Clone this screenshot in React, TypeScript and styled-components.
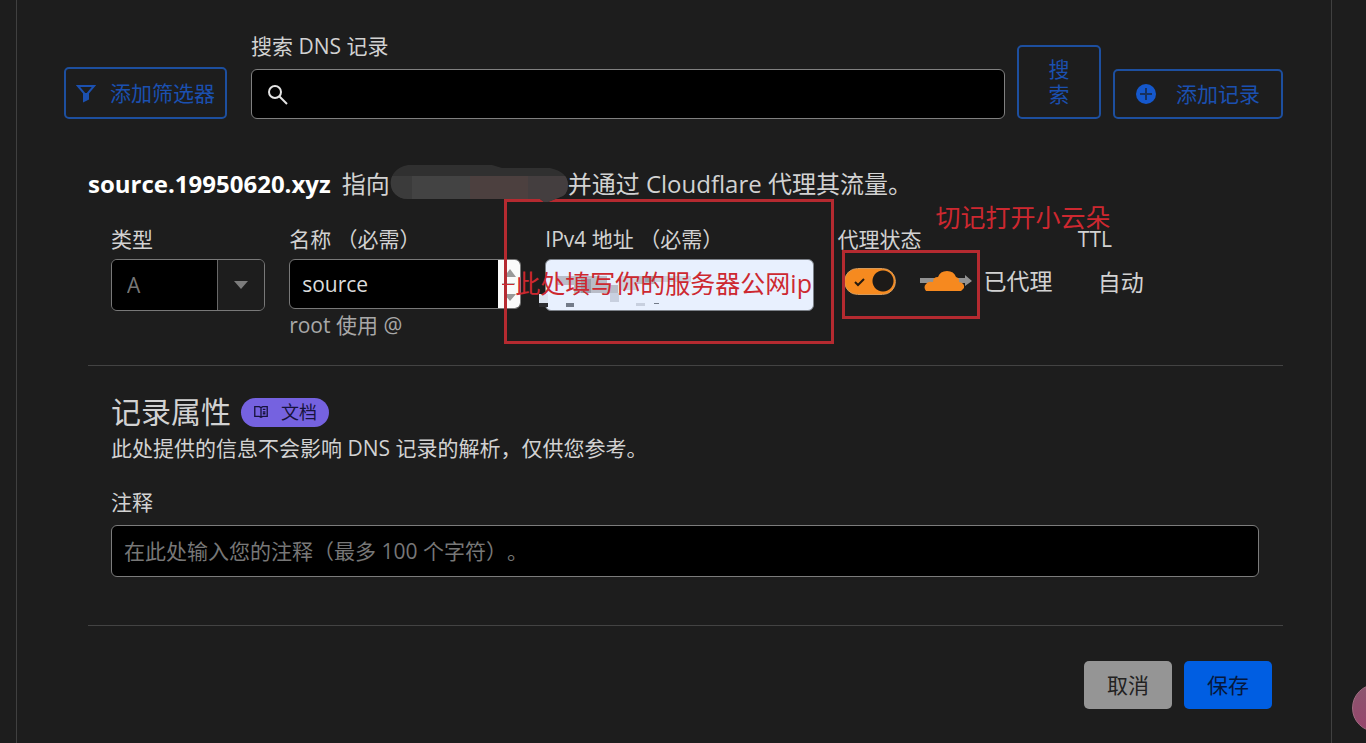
import React from "react";
import styled, { createGlobalStyle } from "styled-components";

const GlobalStyle = createGlobalStyle`
  *, *::before, *::after { box-sizing: border-box; }
  body {
    margin: 0;
    background: #1d1d1d;
    color: #d2d2d2;
    font: 21px/24px "Open Sans", "Noto Sans CJK SC", sans-serif;
    text-spacing-trim: space-all;
  }
  button, input, select { font: inherit; margin: 0; }
`;

const Panel = styled.main`
  min-height: 100vh;
  margin: 0 34px 0 16px;
  padding: 34px 48px 34px 47px;
  border: solid #404040;
  border-width: 0 1px;
`;

const Toolbar = styled.form`
  display: flex;
  align-items: flex-end;
  gap: 12px;
`;

const OutlineButton = styled.button<{ $gap?: number; $pad: number; $tall?: boolean }>`
  display: flex;
  align-items: center;
  justify-content: center;
  gap: ${(p) => p.$gap ?? 0}px;
  flex: none;
  min-height: ${(p) => (p.$tall ? 52 : 50)}px;
  padding: 10px ${(p) => p.$pad}px;
  border: 2px solid #1d4f9f;
  border-radius: 5px;
  background: transparent;
  color: #1b50b0;
  line-height: 25px;
  white-space: nowrap;
`;

const StackedButton = styled(OutlineButton)`
  width: 84px;
  white-space: normal;
`;

const SearchField = styled.div`
  flex: 1;
  min-width: 0;
  margin-left: 12px;
  display: flex;
  flex-direction: column;
  gap: 11px;
`;

const Label = styled.label`
  display: block;
  white-space: nowrap;
`;

const SearchBox = styled.div`
  display: flex;
  align-items: center;
  gap: 10px;
  height: 50px;
  padding: 0 15px;
  border: 1px solid #808080;
  border-radius: 6px;
  background: #000;
`;

const BareInput = styled.input`
  flex: 1;
  min-width: 0;
  border: 0;
  outline: 0;
  background: transparent;
  color: #dcdcdc;
`;

const Record = styled.form`
  margin: 49px 0 0 24px;
`;

const Summary = styled.p`
  display: flex;
  align-items: center;
  height: 32px;
  margin: 0;
  font-size: 24px;
  line-height: 32px;
  white-space: nowrap;
`;

const RecordName = styled.strong`
  margin-right: 11px;
  color: #fff;
`;

const HiddenAddress = styled.svg`
  position: relative;
  z-index: 2;
  flex: none;
`;

const Fields = styled.div`
  display: grid;
  grid-template-columns: 154fr 232fr 268fr 216fr 181fr;
  gap: 24px;
  margin: 27px 24px 28px 23px;
`;

const Field = styled.div`
  position: relative;
  min-width: 0;
  display: flex;
  flex-direction: column;
  gap: 8px;
`;

const SelectBox = styled.div`
  display: grid;
  grid-template-columns: 1fr 47px;
  height: 52px;
  border: 1px solid #787878;
  border-radius: 6px;
  overflow: hidden;
`;

const Select = styled.select`
  appearance: none;
  grid-area: 1 / 1 / 2 / 3;
  padding: 0 15px;
  border: 0;
  background: linear-gradient(to left, #1d1d1d 46px, #686868 46px, #686868 47px, #000 47px);
  color: #777;
  opacity: 1;
`;

const Caret = styled.svg`
  grid-area: 1 / 2 / 2 / 3;
  place-self: center;
  z-index: 1;
  pointer-events: none;
`;

const NameBox = styled.div`
  display: flex;
  height: 50px;
  border: 1px solid #787878;
  border-radius: 6px;
  background: #000;
  overflow: hidden;
`;

const NameInput = styled(BareInput)`
  padding: 0 12px;
`;

const Stepper = styled.svg`
  flex: none;
  background: #fafafa;
`;

const Hint = styled.span`
  margin-top: -4px;
  color: #a8a8a8;
`;

const AddressInput = styled.input`
  width: 100%;
  height: 52px;
  padding: 0 12px;
  border: 1px solid #7c8188;
  border-radius: 6px;
  background: #e8f0fe;
  color: #222;
`;

const Pixelation = styled.svg`
  position: absolute;
  left: -6px;
  top: 49px;
`;

const RedFrame = styled.div<{ $inset: string }>`
  position: absolute;
  z-index: 1;
  inset: ${(p) => p.$inset};
  border: 3px solid #b52a30;
  pointer-events: none;
`;

const RedNote = styled.div<{ $left: number; $top: number }>`
  position: absolute;
  z-index: 2;
  left: ${(p) => p.$left}px;
  top: ${(p) => p.$top}px;
  color: #cd2830;
  font-size: 25px;
  line-height: 26px;
  white-space: nowrap;
  pointer-events: none;
`;

const NoteDash = styled.i`
  position: absolute;
  left: -13px;
  top: 14px;
  width: 12px;
  height: 1px;
  background: #cd2830;
`;

const ProxyRow = styled.label`
  display: flex;
  align-items: center;
  height: 44px;
  padding-left: 6px;
  font-size: 23px;
  white-space: nowrap;
`;

const Toggle = styled.input`
  appearance: none;
  flex: none;
  width: 52px;
  height: 27px;
  margin: 0;
  border: 1px solid #d69a5a;
  border-radius: 14px;
  background:
    url("data:image/svg+xml,%3Csvg xmlns='http://www.w3.org/2000/svg' width='14' height='12' fill='none' stroke='%23261a10' stroke-width='2'%3E%3Cpath d='M2 6l3 3 6-6'/%3E%3C/svg%3E") 8px 7px no-repeat,
    radial-gradient(circle 11px at 38px 12px, #1d1a18 10px, #f68a1f 11px);
`;

const Cloud = styled.svg`
  flex: none;
  margin: 0 12px 0 24px;
`;

const TtlValue = styled.output`
  padding: 8px 20px;
  font-size: 23px;
  line-height: 30px;
  white-space: nowrap;
`;

const Divider = styled.hr`
  height: 1px;
  margin: 0;
  border: 0;
  background: #434343;
`;

const Attributes = styled.section`
  margin: 26px 24px 48px 23px;
`;

const TitleRow = styled.div`
  display: flex;
  align-items: center;
  gap: 10px;
`;

const Title = styled.h2`
  margin: 0;
  font-size: 30px;
  font-weight: 400;
  line-height: 40px;
`;

const DocsLink = styled.a`
  display: flex;
  align-items: center;
  gap: 12px;
  height: 29px;
  padding: 0 12px;
  border-radius: 15px;
  background: #7562e0;
  color: #17133c;
  font-size: 18px;
  text-decoration: none;
`;

const Description = styled.p`
  margin: 4px 0 30px;
`;

const CommentInput = styled.input`
  width: 100%;
  height: 52px;
  margin-top: 11px;
  padding: 0 12px;
  border: 1px solid #7c7c7c;
  border-radius: 6px;
  background: #000;
  color: #dcdcdc;
  &::placeholder { color: #777; opacity: 1; }
`;

const Actions = styled.div`
  display: flex;
  justify-content: flex-end;
  gap: 12px;
  margin: 35px 11px 0 0;
`;

const ActionButton = styled.button<{ $primary?: boolean }>`
  height: 48px;
  padding: 0 23px;
  border: 0;
  border-radius: 5px;
  background: ${(p) => (p.$primary ? "#005ee2" : "#959595")};
  color: ${(p) => (p.$primary ? "#06183c" : "#222")};
`;

const FloatingBall = styled.button`
  position: fixed;
  right: -34px;
  bottom: 11px;
  width: 48px;
  height: 48px;
  padding: 0;
  border: 1px solid #a06c82;
  border-radius: 50%;
  background: linear-gradient(#8a566e, #97456c);
`;

export default function App() {
  return (
    <>
      <GlobalStyle />
      <Panel>
        <Toolbar onSubmit={(e) => e.preventDefault()}>
          <OutlineButton type="button" $gap={14} $pad={10} $tall>
            <svg width="20" height="20" viewBox="0 0 20 20" fill="none" stroke="currentColor" strokeWidth="2">
              <path d="M2 3h16l-6 7v6l-4 2v-8z" />
              <path d="M10 10v7" />
            </svg>
            添加筛选器
          </OutlineButton>
          <SearchField>
            <Label htmlFor="search">搜索 DNS 记录</Label>
            <SearchBox>
              <svg width="22" height="22" viewBox="0 0 22 22" fill="none" stroke="#e4e4e4" strokeWidth="2">
                <circle cx="8" cy="9" r="6" />
                <path d="M12 13l8 8" />
              </svg>
              <BareInput id="search" type="search" />
            </SearchBox>
          </SearchField>
          <StackedButton type="submit" $pad={28}>搜索</StackedButton>
          <OutlineButton type="button" $gap={20} $pad={21}>
            <svg width="20" height="20" viewBox="0 0 20 20">
              <circle cx="10" cy="10" r="10" fill="#1558cc" />
              <path d="M10 4v12M4 10h12" stroke="#17315f" strokeWidth="2" />
            </svg>
            添加记录
          </OutlineButton>
        </Toolbar>

        <Record onSubmit={(e) => e.preventDefault()}>
          <Summary>
            <RecordName>source.19950620.xyz</RecordName>
            指向
            <HiddenAddress width="178" height="38" viewBox="0 0 178 38">
              <clipPath id="smudge">
                <path d="M18 0H102L112 3H160Q178 7 178 20Q178 31 168 33L158 37H154L150 34H18C-4 34-6 4 18 0Z" />
              </clipPath>
              <g clipPath="url(#smudge)">
                <path fill="#303030" d="M0 0H178V38H0Z" />
                <path fill="#3b3b3b" d="M0 11H22V38H0Z" />
                <path fill="#434343" d="M22 11H80V38H22Z" />
                <path fill="#4c403f" d="M80 11H138V38H80Z" />
                <path fill="#443e3f" d="M138 11H178V38H138Z" />
              </g>
            </HiddenAddress>
            并通过 Cloudflare 代理其流量。
          </Summary>

          <Fields>
            <Field>
              <Label htmlFor="type">类型</Label>
              <SelectBox>
                <Select id="type" disabled>
                  <option>A</option>
                </Select>
                <Caret width="16" height="10" viewBox="0 0 16 10">
                  <path d="M1 1h14L8 9z" fill="#7c7c7c" />
                </Caret>
              </SelectBox>
            </Field>
            <Field>
              <Label htmlFor="name">名称 （必需）</Label>
              <NameBox>
                <NameInput id="name" defaultValue="source" />
                <Stepper width="22" height="48" viewBox="0 0 22 48">
                  <path d="M6 17l6-8 6 8zM6 34h12l-6 7z" fill="#999" />
                  <path d="M4 24h13" stroke="#777" />
                </Stepper>
              </NameBox>
              <Hint>root 使用 @</Hint>
            </Field>
            <Field>
              <Label htmlFor="address">IPv4 地址 （必需）</Label>
              <AddressInput id="address" />
              <Pixelation width="170" height="34" viewBox="0 0 170 34">
                <path fill="#b9bdc8" d="M18 0h50v9H18zM35 9h44v8H35zM98 0h18v8H98z" />
                <path fill="#ccd2de" d="M80 0h18v14H80zM116 0h36v6h-36z" />
                <path fill="#9ba1ac" d="M42 3h10v14H42zM106 0h10v6h-10z" />
                <path fill="#dce3ef" d="M0 18h9v9H0z" />
                <path fill="#2c2c2f" d="M0 27h9v4H0z" />
                <path fill="#c8d0df" d="M71 17h9v9h-9zM97 27h9v3h-9z" />
                <path fill="#737b89" d="M27 27h8v4h-8zM115 27h5v1h-5z" />
              </Pixelation>
              <RedFrame $inset="-28px -20px -7px -41px" />
              <RedNote $left={-30} $top={43}>
                <NoteDash />
                此处填写你的服务器公网ip
              </RedNote>
            </Field>
            <Field>
              <Label as="span">代理状态</Label>
              <ProxyRow>
                <Toggle type="checkbox" role="switch" defaultChecked />
                <Cloud width="52" height="24" viewBox="0 0 52 24">
                  <path d="M0 9h45V6l7 6-7 5v-3H0z" fill="#929292" />
                  <path
                    d="M6 22Q3 18 6 15Q8 12 13 13Q13 8 18 8Q20 2 27 2Q34 2 36 8Q40 9 39 13Q45 14 44 19L41 22Z"
                    fill="#f6891f"
                  />
                </Cloud>
                已代理
              </ProxyRow>
              <RedFrame $inset="23px 74px 18px 4px" />
              <RedNote $left={98} $top={-23}>切记打开小云朵</RedNote>
            </Field>
            <Field>
              <Label htmlFor="ttl">TTL</Label>
              <TtlValue id="ttl">自动</TtlValue>
            </Field>
          </Fields>

          <Divider />

          <Attributes>
            <TitleRow>
              <Title>记录属性</Title>
              <DocsLink href="#docs">
                <svg width="16" height="16" viewBox="0 0 18 16" fill="none" stroke="currentColor" strokeWidth="1.5">
                  <path d="M9 3L7 2H2v11h5l2 1 2-1h5V2h-5L9 3v11M11 5h3M11 8h3M11 10h3" />
                </svg>
                文档
              </DocsLink>
            </TitleRow>
            <Description>此处提供的信息不会影响 DNS 记录的解析，仅供您参考。</Description>
            <Label htmlFor="comment">注释</Label>
            <CommentInput id="comment" placeholder="在此处输入您的注释（最多 100 个字符）。" />
          </Attributes>

          <Divider />

          <Actions>
            <ActionButton type="button">取消</ActionButton>
            <ActionButton type="submit" $primary>保存</ActionButton>
          </Actions>
        </Record>
      </Panel>
      <FloatingBall type="button" aria-label="助手" />
    </>
  );
}
